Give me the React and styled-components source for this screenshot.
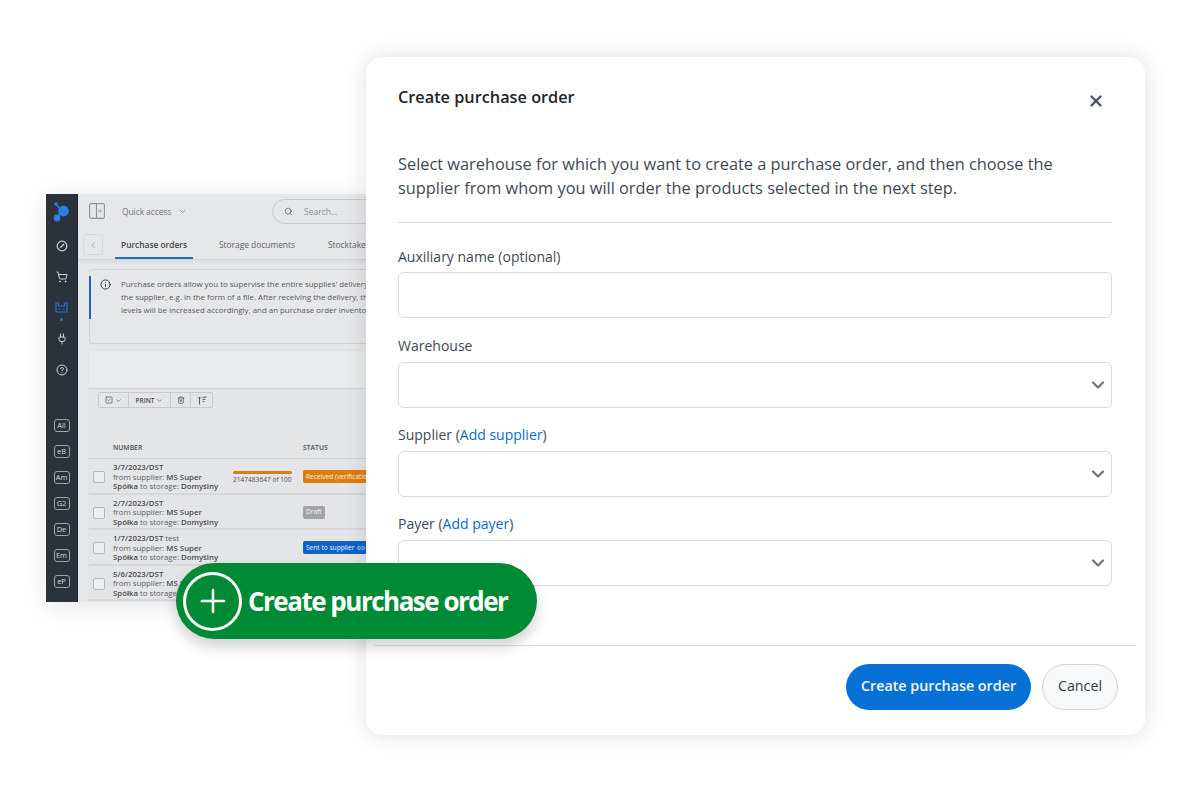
import React from "react";
import styled, { createGlobalStyle } from "styled-components";
import { X, ChevronDown, ChevronLeft, Search, Info, ShoppingCart, Plug, CircleHelp, Plus, Link2, Trash2, SquareCheck } from "lucide-react";

const Global = createGlobalStyle`
  html, body { margin: 0; padding: 0; background: #fff; }
  body { font-family: "Open Sans", "Noto Sans", sans-serif; }
`;

const Canvas = styled.div`
  position: relative;
  width: 1186px;
  height: 792px;
  overflow: hidden;
  background: #fff;
`;

/* background app window */
const AppWindow = styled.div`
  position: absolute;
  left: 46px;
  top: 194px;
  width: 320px;
  height: 408px;
  display: flex;
  background: #e6e7e9;
  box-shadow: 0 4px 24px rgba(0, 0, 0, 0.1);
`;
const Rail = styled.div`
  flex: none;
  width: 32px;
  background: #2a323c;
  border-right: 1px solid #1f252d;
  box-sizing: border-box;
  display: flex;
  flex-direction: column;
  align-items: center;
  padding-top: 8px;
`;
const LogoWrap = styled.div`
  height: 21px;
  margin-bottom: 7px;
  line-height: 0;
`;
const RailIcon = styled.div`
  height: 31px;
  width: 100%;
  flex: none;
  display: flex;
  align-items: center;
  justify-content: center;
  position: relative;
  color: ${(p) => (p.$active ? "#2f6fd0" : "#d0d3d6")};
`;
const RailDot = styled.span`
  position: absolute;
  bottom: 2px;
  left: 14px;
  width: 3px;
  height: 3px;
  border-radius: 50%;
  background: #2f6fd0;
`;
const ChannelList = styled.div`
  margin-top: 34px;
  display: flex;
  flex-direction: column;
  gap: 13px;
`;
const Channel = styled.div`
  width: 16px;
  height: 13px;
  box-sizing: border-box;
  border: 1px solid #a0a4a9;
  border-radius: 3px;
  color: #d8dadd;
  font-size: 7.5px;
  line-height: 11px;
  text-align: center;
`;
const Main = styled.div`
  flex: 1;
  min-width: 0;
  display: flex;
  flex-direction: column;
`;
const TopBar = styled.div`
  height: 34px;
  flex: none;
  display: flex;
  align-items: center;
  padding-left: 11px;
  color: #71767c;
  font-size: 8.5px;
  & > svg { flex: none; }
`;
const QuickAccess = styled.span`
  flex: none;
  margin-left: 17px;
  display: flex;
  align-items: center;
  gap: 7px;
  width: 150px;
  letter-spacing: -0.1px;
`;
const SearchBox = styled.div`
  flex: none;
  width: 120px;
  height: 25px;
  box-sizing: border-box;
  border: 1px solid #c6c8cc;
  border-radius: 13px 0 0 13px;
  display: flex;
  align-items: center;
  gap: 11px;
  padding-left: 11px;
  color: #8b9096;
`;
const TabBar = styled.div`
  height: 32px;
  flex: none;
  display: flex;
  align-items: stretch;
  padding-left: 5px;
  font-size: 8.4px;
  color: #5d6268;
  white-space: nowrap;
  border-bottom: 1px solid #d2d4d7;
  box-sizing: border-box;
  box-shadow: 0 2px 4px rgba(0, 0, 0, 0.06);
`;
const BackButton = styled.div`
  flex: none;
  width: 20px;
  height: 21px;
  margin-top: 6px;
  box-sizing: border-box;
  border: 1px solid #d6d8db;
  border-radius: 3px;
  display: flex;
  align-items: center;
  justify-content: center;
  color: #a1a5aa;
`;
const Tab = styled.div`
  margin-left: ${(p) => p.$gap}px;
  padding: 3px 6px 0;
  display: flex;
  align-items: center;
  height: 31px;
  box-sizing: border-box;
  font-weight: ${(p) => (p.$active ? 600 : 400)};
  color: ${(p) => (p.$active ? "#42474d" : "#5d6268")};
  border-bottom: 2px solid ${(p) => (p.$active ? "#1f6fd0" : "transparent")};
`;
const Notice = styled.div`
  position: relative;
  flex: none;
  margin: 9px 0 7px 11px;
  height: 75px;
  box-sizing: border-box;
  border: 1px solid #d0d2d5;
  border-right: none;
  border-radius: 4px 0 0 4px;
  display: flex;
  gap: 10px;
  padding: 8px 0 0 10px;
  font-size: 7.9px;
  line-height: 13px;
  color: #55595f;
  white-space: nowrap;
  &::before {
    content: "";
    position: absolute;
    left: -1px;
    top: 6px;
    width: 2px;
    height: 43px;
    background: #1f5fbf;
  }
`;
const NoticeIcon = styled.div`
  flex: none;
  color: #2e3338;
  padding-top: 1px;
  line-height: 0;
`;
const TableCard = styled.div`
  flex: 1;
  margin-left: 11px;
  background: #e4e5e7;
  border-radius: 3px 0 0 0;
  box-shadow: 0 -1px 3px rgba(0, 0, 0, 0.04);
  display: flex;
  flex-direction: column;
  white-space: nowrap;
`;
const CardHead = styled.div`
  height: 38px;
  flex: none;
  box-sizing: border-box;
  background: #e9eaeb;
  border-bottom: 1px solid #d0d2d5;
`;
const ToolGroup = styled.div`
  margin: 3px 0 0 9px;
  height: 16px;
  width: 115px;
  box-sizing: border-box;
  flex: none;
  display: flex;
  border: 1px solid #c8cacd;
  border-radius: 2px;
  color: #4a4f55;
  font-size: 6.5px;
  font-weight: 600;
`;
const ToolCell = styled.div`
  width: ${(p) => p.$w}px;
  flex: none;
  box-sizing: border-box;
  display: flex;
  align-items: center;
  justify-content: center;
  gap: 2px;
  &:not(:last-child) { border-right: 1px solid #c8cacd; }
`;
const ColumnHead = styled.div`
  margin-top: 28px;
  height: 23px;
  flex: none;
  display: flex;
  box-sizing: border-box;
  padding: 7px 0 0 24px;
  font-size: 6.8px;
  font-weight: 600;
  color: #4a4f55;
  border-bottom: 1px solid #d0d2d5;
`;
const NumberHead = styled.span`
  flex: none;
  width: 190px;
`;
const Row = styled.div`
  height: 35.5px;
  flex: none;
  box-sizing: border-box;
  padding-top: 4px;
  border-bottom: 2px solid #d6d7da;
  display: flex;
  align-items: flex-start;
  font-size: 7.8px;
  line-height: 9.6px;
  color: #5a5f65;
`;
const Check = styled.div`
  flex: none;
  width: 12px;
  height: 12px;
  margin: 8px 8px 0 4px;
  box-sizing: border-box;
  border: 1px solid #b4b7bb;
  border-radius: 2px;
  background: #eeeff0;
`;
const RowText = styled.div`
  flex: none;
  width: 120px;
  b { font-weight: 600; color: #484d53; }
`;
const Progress = styled.div`
  flex: none;
  width: 70px;
  margin-top: 8px;
  font-size: 6.6px;
  line-height: 9px;
  color: #4a4f55;
  &::before {
    content: "";
    display: block;
    width: 59px;
    height: 3px;
    border-radius: 2px;
    background: #e07c0c;
    margin-bottom: 1px;
  }
`;
const Status = styled.div`
  flex: none;
  height: 13px;
  margin-top: 7px;
  padding: 0 3px;
  display: flex;
  align-items: center;
  gap: 3px;
  border-radius: 2px;
  font-size: 6.6px;
  font-weight: 500;
  color: #f3f3f3;
  background: ${(p) => p.$bg};
`;
const RowSpacer = styled.div`
  flex: none;
  width: ${(p) => p.$w}px;
`;

/* dialog */
const Dialog = styled.div`
  position: absolute;
  left: 366px;
  top: 57px;
  width: 779px;
  height: 678px;
  box-sizing: border-box;
  background: #fff;
  border-radius: 16px;
  box-shadow: 0 0 22px rgba(0, 0, 0, 0.13);
  padding: 0 33px 0 32px;
  display: flex;
  flex-direction: column;
  color: #3f4954;
`;
const DialogHead = styled.div`
  flex: none;
  height: 82px;
  display: flex;
  justify-content: space-between;
  padding-top: 29px;
  box-sizing: border-box;
`;
const DialogTitle = styled.h2`
  margin: 0;
  font-size: 16.3px;
  line-height: 22px;
  font-weight: 600;
  color: #1e252c;
`;
const CloseIcon = styled.div`
  color: #4a5663;
  margin: 6px 7px 0 0;
  line-height: 0;
`;
const Lead = styled.p`
  margin: 14px 0 0;
  font-size: 16.35px;
  line-height: 23.5px;
  padding-bottom: 22px;
  border-bottom: 1px solid #d5d9e2;
  white-space: nowrap;
`;
const Field = styled.div`
  margin-top: ${(p) => p.$mt}px;
  display: flex;
  flex-direction: column;
`;
const Label = styled.label`
  font-size: 14px;
  line-height: 20px;
  margin-bottom: 5.5px;
  a { color: #0a68cf; text-decoration: none; }
`;
const InputBox = styled.div`
  height: 46px;
  box-sizing: border-box;
  border: 1.5px solid #d5d9e2;
  border-radius: 6px;
  display: flex;
  align-items: center;
  justify-content: flex-end;
  padding-right: 3px;
  color: #6a7580;
  background: #fff;
`;
const Footer = styled.div`
  position: absolute;
  left: 8px;
  right: 9px;
  bottom: 0;
  height: 90px;
  box-sizing: border-box;
  border-top: 1.5px solid #d9dce3;
  display: flex;
  justify-content: flex-end;
  align-items: flex-start;
  gap: 11px;
  padding: 17.5px 18px 0 0;
`;
const Button = styled.button`
  height: 46px;
  box-sizing: border-box;
  border-radius: 23px;
  font-family: inherit;
  font-size: 14.3px;
  line-height: 20px;
  font-weight: ${(p) => (p.$primary ? 600 : 500)};
  padding: 0 0 1px;
  width: ${(p) => p.$w}px;
  color: ${(p) => (p.$primary ? "#f4f8fd" : "#333a44")};
  background: ${(p) => (p.$primary ? "#0670d6" : "#f8f9fa")};
  border: ${(p) => (p.$primary ? "none" : "1.5px solid #d0d4dc")};
`;

/* green pill */
const Pill = styled.div`
  position: absolute;
  left: 176px;
  top: 563px;
  width: 361px;
  height: 76px;
  border-radius: 38px;
  background: #008a35;
  box-shadow: 0 8px 14px rgba(0, 0, 0, 0.18);
  display: flex;
  align-items: center;
  padding-left: 7px;
  box-sizing: border-box;
  gap: 6px;
  color: #fff;
`;
const PlusRing = styled.div`
  flex: none;
  width: 59px;
  height: 59px;
  box-sizing: border-box;
  border: 3.5px solid #fff;
  border-radius: 50%;
  display: flex;
  align-items: center;
  justify-content: center;
`;
const PillText = styled.span`
  font-size: 26px;
  font-weight: 700;
  letter-spacing: -1.5px;
  white-space: nowrap;
`;

const LogoMark = () => (
  <svg width="17" height="20" viewBox="0 0 17 20">
    <line x1="3.5" y1="2" x2="8" y2="9" stroke="#2f7fe0" strokeWidth="1.4" />
    <line x1="8" y1="9" x2="4" y2="16" stroke="#2f7fe0" strokeWidth="1.4" />
    <circle cx="3" cy="2" r="1.8" fill="#2f7fe0" />
    <circle cx="10.5" cy="9" r="5.4" fill="#2f7fe0" />
    <circle cx="4" cy="16" r="3.4" fill="#2f7fe0" />
  </svg>
);
const GaugeIcon = () => (
  <svg width="12" height="12" viewBox="0 0 12 12" fill="none" stroke="currentColor" strokeWidth="1.2">
    <circle cx="6" cy="6" r="4.8" />
    <path d="M4.3 7.7 8 4" strokeWidth="1.4" />
  </svg>
);
const WarehouseIcon = () => (
  <svg width="13" height="11" viewBox="0 0 13 11" fill="none" stroke="currentColor" strokeWidth="1.2">
    <path d="M1 10V1h2.5v3h6V1H12v9z" />
    <path d="M3.5 7h2M7.5 7h2" />
  </svg>
);
const PanelToggle = () => (
  <svg width="16" height="16" viewBox="0 0 16 16" fill="none" stroke="#8e9297" strokeWidth="1.1">
    <rect x="0.6" y="0.6" width="14.8" height="14.8" rx="1.5" />
    <path d="M7.5 1v14" />
    <path d="M9 8h3.2M10.8 6.4 12.4 8l-1.6 1.6" strokeWidth="0.9" />
  </svg>
);
const SortIcon = () => (
  <svg width="10" height="9" viewBox="0 0 10 9" fill="none" stroke="currentColor" strokeWidth="0.9">
    <path d="M2.5 8.5V1M1 2.5 2.5 1 4 2.5" />
    <path d="M5.5 1.2h4M5.5 3.4h3M5.5 5.6h1.8" />
  </svg>
);

const rows = [
  { id: "3/7/2023/DST", progress: true, status: "Received (verification)", bg: "#e07c0c" },
  { id: "2/7/2023/DST", status: "Draft", bg: "#a1a3a6" },
  { id: "1/7/2023/DST", extra: " test", status: "Sent to supplier", bg: "#0f62c9", link: true },
  { id: "5/6/2023/DST" },
];

const channels = ["All", "eB", "Am", "G2", "De", "Em", "eP"];

export default function App() {
  return (
    <Canvas>
      <Global />
      <AppWindow>
        <Rail>
          <LogoWrap><LogoMark /></LogoWrap>
          <RailIcon><GaugeIcon /></RailIcon>
          <RailIcon><ShoppingCart size={12} /></RailIcon>
          <RailIcon $active><WarehouseIcon /><RailDot /></RailIcon>
          <RailIcon><Plug size={12} /></RailIcon>
          <RailIcon><CircleHelp size={12} /></RailIcon>
          <ChannelList>
            {channels.map((c) => <Channel key={c}>{c}</Channel>)}
          </ChannelList>
        </Rail>
        <Main>
          <TopBar>
            <PanelToggle />
            <QuickAccess>Quick access <ChevronDown size={9} /></QuickAccess>
            <SearchBox><Search size={9} color="#55595f" />Search...</SearchBox>
          </TopBar>
          <TabBar>
            <BackButton><ChevronLeft size={10} /></BackButton>
            <Tab $active $gap={12}>Purchase orders</Tab>
            <Tab $gap={20}>Storage documents</Tab>
            <Tab $gap={21}>Stocktake</Tab>
          </TabBar>
          <Notice>
            <NoticeIcon><Info size={11} /></NoticeIcon>
            <div>
              Purchase orders allow you to supervise the entire supplies' delivery<br />
              the supplier, e.g. in the form of a file. After receiving the delivery, the<br />
              levels will be increased accordingly, and an purchase order inventory
            </div>
          </Notice>
          <TableCard>
            <CardHead />
            <ToolGroup>
              <ToolCell $w={30}><SquareCheck size={8} /><ChevronDown size={7} /></ToolCell>
              <ToolCell $w={42}>PRINT <ChevronDown size={7} /></ToolCell>
              <ToolCell $w={20}><Trash2 size={8} /></ToolCell>
              <ToolCell $w={22}><SortIcon /></ToolCell>
            </ToolGroup>
            <ColumnHead>
              <NumberHead>NUMBER</NumberHead>
              <span>STATUS</span>
            </ColumnHead>
            {rows.map((r) => (
              <Row key={r.id}>
                <Check />
                <RowText>
                  <b>{r.id}</b>{r.extra}<br />
                  from supplier: <b>MS Super</b><br />
                  <b>Spółka</b> to storage: <b>Domyślny</b>
                </RowText>
                {r.progress ? <Progress>2147483647 of 100</Progress> : <RowSpacer $w={70} />}
                {r.status && (
                  <Status $bg={r.bg}>
                    {r.status}
                    {r.link && <Link2 size={8} />}
                  </Status>
                )}
              </Row>
            ))}
          </TableCard>
        </Main>
      </AppWindow>

      <Dialog>
        <DialogHead>
          <DialogTitle>Create purchase order</DialogTitle>
          <CloseIcon><X size={18} strokeWidth={3.2} /></CloseIcon>
        </DialogHead>
        <Lead>
          Select warehouse for which you want to create a purchase order, and then choose the<br />
          supplier from whom you will order the products selected in the next step.
        </Lead>
        <Field $mt={23.5}>
          <Label>Auxiliary name (optional)</Label>
          <InputBox />
        </Field>
        <Field $mt={18}>
          <Label>Warehouse</Label>
          <InputBox><ChevronDown size={20} strokeWidth={2.6} /></InputBox>
        </Field>
        <Field $mt={17.5}>
          <Label>Supplier (<a>Add supplier</a>)</Label>
          <InputBox><ChevronDown size={20} strokeWidth={2.6} /></InputBox>
        </Field>
        <Field $mt={17.5}>
          <Label>Payer (<a>Add payer</a>)</Label>
          <InputBox><ChevronDown size={20} strokeWidth={2.6} /></InputBox>
        </Field>
        <Footer>
          <Button $primary $w={185}>Create purchase order</Button>
          <Button $w={76}>Cancel</Button>
        </Footer>
      </Dialog>

      <Pill>
        <PlusRing><Plus size={38} strokeWidth={1.6} /></PlusRing>
        <PillText>Create purchase order</PillText>
      </Pill>
    </Canvas>
  );
}
